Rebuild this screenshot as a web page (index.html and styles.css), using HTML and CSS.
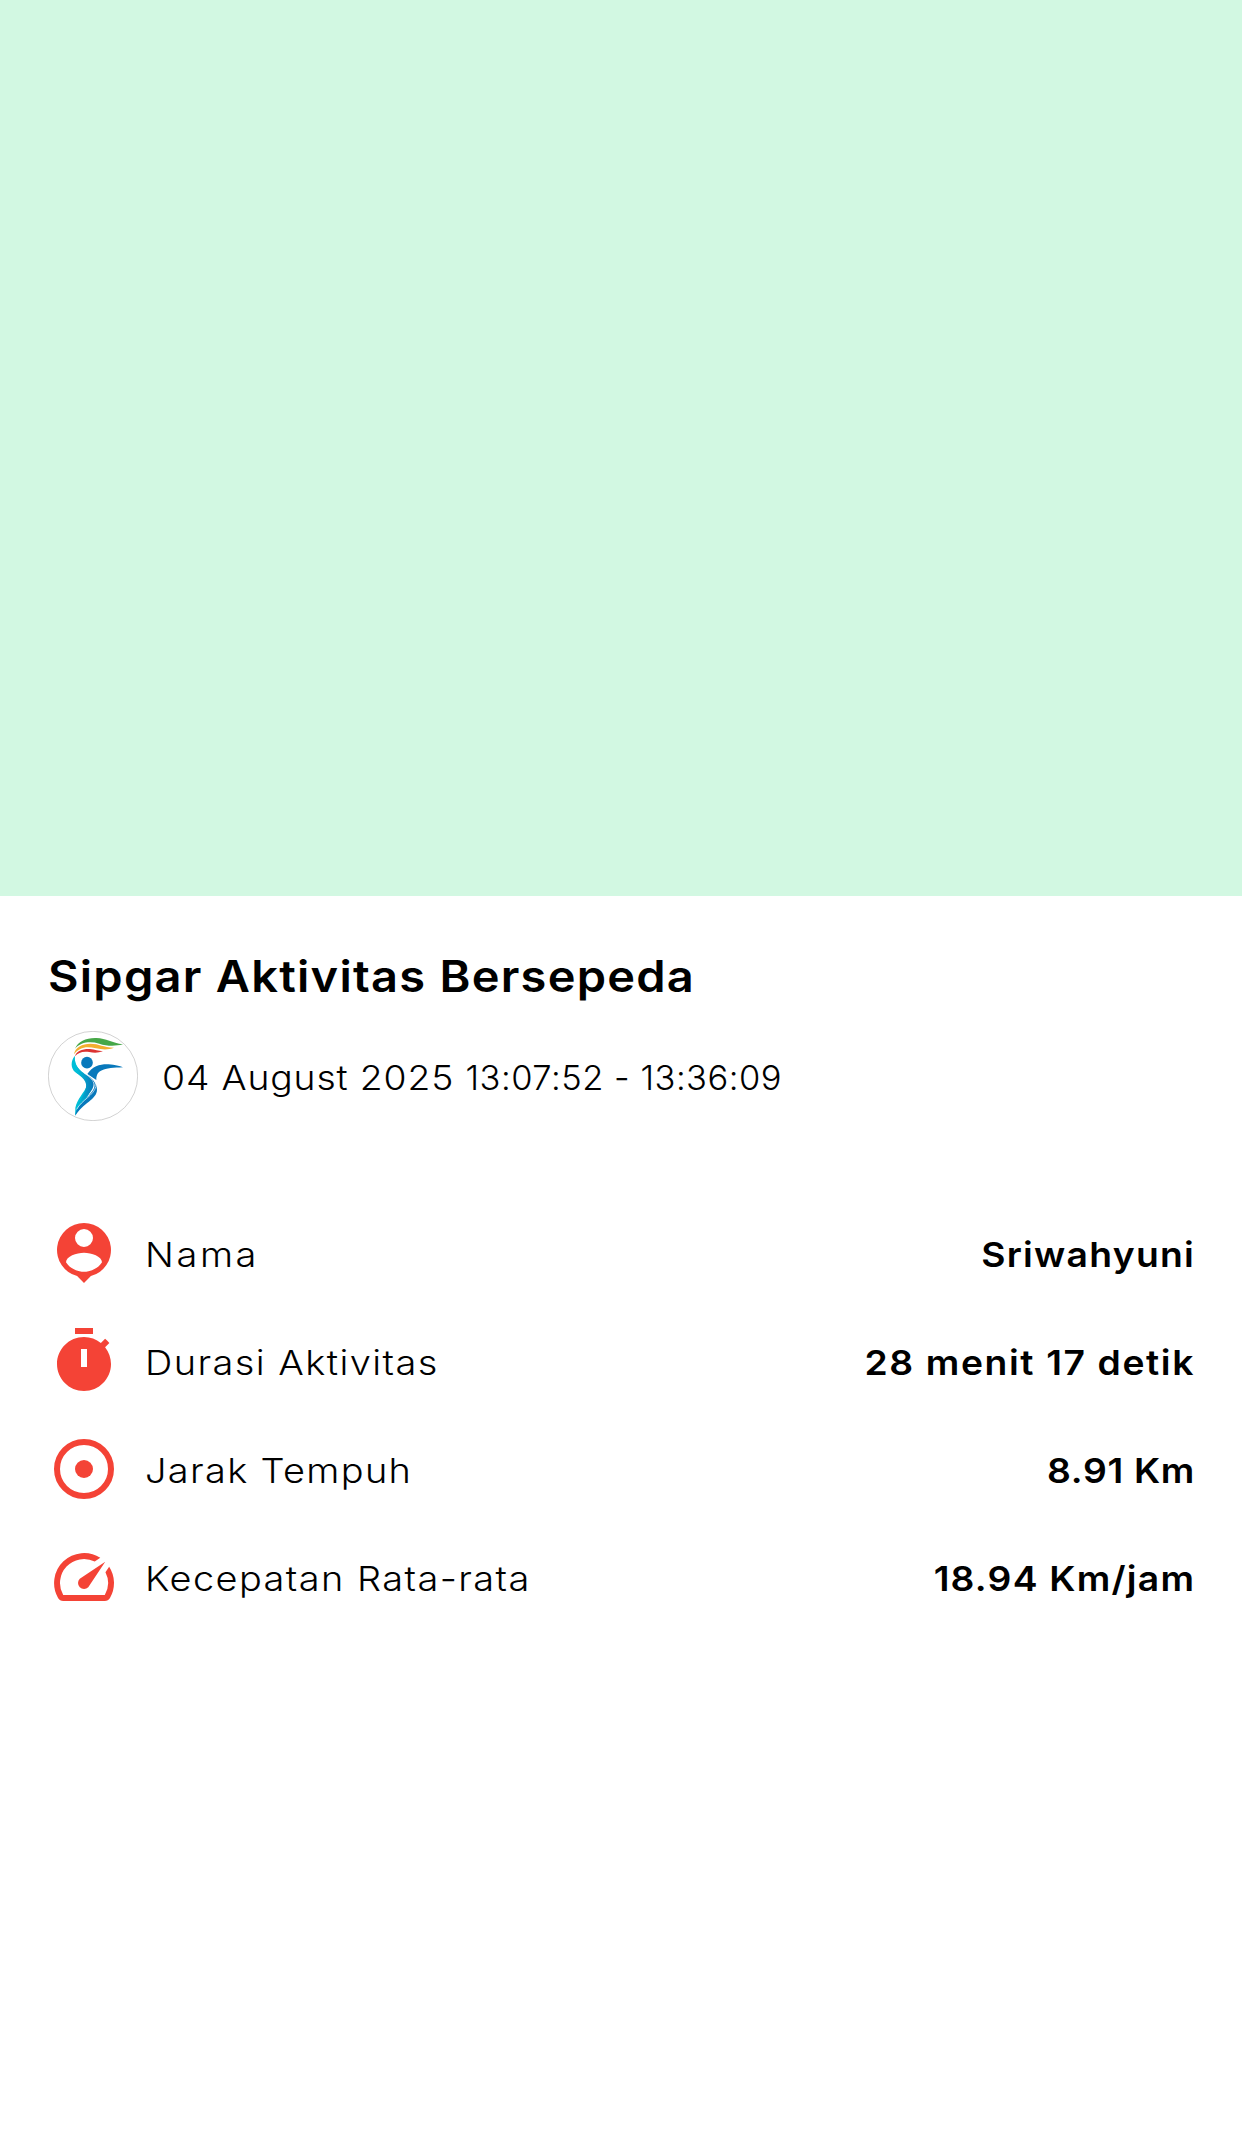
FILE: index.html
```html
<!DOCTYPE html>
<html lang="id">
<head>
<meta charset="utf-8">
<title>Sipgar Aktivitas Bersepeda</title>
<link rel="stylesheet" href="styles.css">
</head>
<body>
<div class="map"></div>
<main class="detail">
  <h1 class="title">Sipgar Aktivitas Bersepeda</h1>
  <div class="when">
    <svg class="avatar" viewBox="24 33 270 270" aria-hidden="true">
      <defs>
        <linearGradient id="body" x1="0" y1="0" x2="1" y2="0"><stop offset="0.2" stop-color="#00bfd8"/><stop offset="1" stop-color="#0874b8"/></linearGradient>
      </defs>
      <circle cx="159" cy="168" r="134" fill="#fff" stroke="#b4b4b4" stroke-width="1.8"/>
      <path fill="#46a748" d="M105 86C114 64 139 53 169 54C199 55 216 69 249 73C222 80 200 78 178 71C150 63 122 66 105 86Z"/>
      <path fill="#f3ae2e" d="M102 103C105 82 127 71 151 71C178 71 189 82 222 83C205 90 188 89 168 85C137 78 119 82 102 103Z"/>
      <path fill="#dc3332" d="M105 109C109 92 129 86 150 87C166 88 174 93 189 94C174 99 162 99 148 96C128 93 115 97 105 109Z"/>
      <circle cx="141" cy="128" r="17.5" fill="#0878bb"/>
      <path fill="#0878bb" d="M142 162C158 138 181 132 206 133C225 134 239 138 249 142C221 143 200 144 183 152C171 158 169 168 169 180Z"/>
      <path fill="#00bed6" d="M105 107C91 122 92 145 106 157C121 170 145 174 140 199C133 217 112 237 106 263L106 286C117 265 142 237 153 208C163 184 132 165 117 148C107 136 103 123 105 107Z"/>
      <path fill="url(#body)" d="M104 112C103 138 120 151 136 163C160 181 166 190 157 207C145 231 118 243 106 287C107 247 142 221 138 192C134 171 105 163 98 139Z"/>
      <path fill="#0878bb" d="M137 162C155 173 170 185 171 209C171 238 128 249 106 287C111 249 154 230 163 202C167 187 155 177 137 162Z"/>
      <path fill="none" stroke="#fff" stroke-width="2" d="M132 158C151 171 168 181 168 199C160 228 126 239 110 268"/>
    </svg>
    <div class="date"><span class="day">04 August 2025</span> <span class="time">13:07:52 - 13:36:09</span></div>
  </div>
  <div class="stats">
    <div class="row">
      <svg class="icon" viewBox="0 0 24 24"><path fill-rule="evenodd" d="M12 2a9 9 0 0 0-2.3 17.7L12 22l2.3-2.3A9 9 0 0 0 12 2zM12 4a3 3 0 1 1 0 6 3 3 0 0 1 0-6zM12 18.25c-2.5 0-4.8-1.25-6-3.15.03-2 3.5-3.2 6-3.2s5.97 1.2 6 3.2c-1.2 1.9-3.5 3.15-6 3.15z"/></svg>
      <span class="label name">Nama</span>
      <span class="value name-value">Sriwahyuni</span>
    </div>
    <div class="row">
      <svg class="icon" viewBox="0 0 24 24"><path fill-rule="evenodd" d="M15 1H9v2h6V1zm-4 13h2V8h-2v6zm8.03-6.61l1.42-1.42c-.43-.51-.9-.99-1.41-1.41l-1.42 1.42C16.07 4.74 14.12 4 12 4c-4.97 0-9 4.03-9 9s4.02 9 9 9 9-4.03 9-9c0-2.12-.74-4.07-1.97-5.61z"/></svg>
      <span class="label duration">Durasi Aktivitas</span>
      <span class="value duration-value">28 menit 17 detik</span>
    </div>
    <div class="row">
      <svg class="icon" viewBox="0 0 24 24"><circle cx="12" cy="12" r="9" fill="none" stroke="#f44336" stroke-width="2"/><circle cx="12" cy="12" r="3"/></svg>
      <span class="label distance">Jarak Tempuh</span>
      <span class="value distance-value">8.91 Km</span>
    </div>
    <div class="row">
      <svg class="icon" viewBox="0 0 24 24"><path d="M20.38 8.57l-1.23 1.85a8 8 0 0 1-.22 7.58H5.07A8 8 0 0 1 15.58 6.85l1.85-1.23A10 10 0 0 0 3.35 19a2 2 0 0 0 1.72 1h13.85a2 2 0 0 0 1.74-1 10 10 0 0 0-.27-10.44zM10.59 15.41a2 2 0 0 0 2.83 0l5.66-8.49-8.49 5.66a2 2 0 0 0 0 2.83z"/></svg>
      <span class="label speed">Kecepatan Rata-rata</span>
      <span class="value speed-value">18.94 Km/jam</span>
    </div>
  </div>
</main>
</body>
</html>
```
FILE: styles.css
```css
body {
  margin: 0;
  min-height: 2148px;
  background: #fff;
  color: #000;
  font-family: Inter, "Open Sans", sans-serif;
  font-size: 34.5px;
  line-height: 44px;
  white-space: nowrap;
}

.map {
  height: 896px;
  background: #d2f8e2;
}

.detail {
  padding: 52px 48px 0;
}

.title {
  margin: 0;
  font-size: 43.5px;
  font-weight: 600;
  line-height: 56px;
  letter-spacing: 1.16px;
  transform: scaleX(1.08);
  transform-origin: left;
}

.when {
  display: flex;
  align-items: center;
  gap: 24px;
  margin-top: 27px;
}

.avatar {
  width: 90px;
  height: 90px;
  flex: none;
}

.date {
  display: flex;
  gap: 33px;
  padding-top: 4px;
  font-weight: 300;
}

.day {
  letter-spacing: 0.8px;
  transform: scaleX(1.08);
  transform-origin: left;
}

.time {
  letter-spacing: 0.5px;
}

.stats {
  display: grid;
  gap: 36px;
  margin-top: 96px;
}

.row {
  display: flex;
  align-items: center;
  height: 72px;
}

.icon {
  width: 72px;
  height: 72px;
  margin-right: 24.5px;
  flex: none;
  fill: #f44336;
}

/* Labels and values are set slightly extended, anchored to their own edge. */
.label {
  flex: 1;
  padding-top: 3px;
  font-weight: 300;
  transform: scaleX(1.1);
  transform-origin: left;
}

.value {
  padding-top: 3px;
  font-weight: 600;
  transform: scaleX(1.08);
  transform-origin: right;
}

.name { letter-spacing: 2.37px; }
.duration { letter-spacing: 1.3px; }
.distance { letter-spacing: 1.2px; }
.speed { letter-spacing: 1.29px; }

.name-value { letter-spacing: 1.18px; margin-right: -1px; }
.duration-value { letter-spacing: 1.49px; margin-right: -1px; }
.distance-value { letter-spacing: 0.62px; margin-right: -1px; }
.speed-value { letter-spacing: 1.13px; margin-right: -1px; }
```
